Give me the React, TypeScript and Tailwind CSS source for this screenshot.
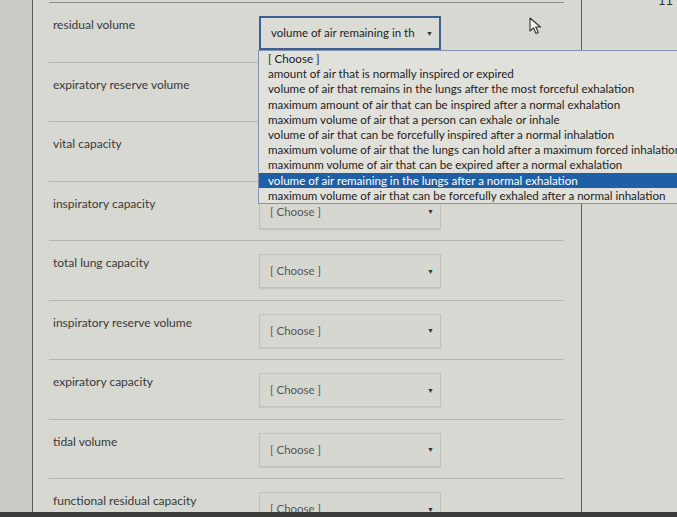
import React from "react"

const rows = [
  "residual volume",
  "expiratory reserve volume",
  "vital capacity",
  "inspiratory capacity",
  "total lung capacity",
  "inspiratory reserve volume",
  "expiratory capacity",
  "tidal volume",
  "functional residual capacity",
]

const options = [
  "[ Choose ]",
  "amount of air that is normally inspired or expired",
  "volume of air that remains in the lungs after the most forceful exhalation",
  "maximum amount of air that can be inspired after a normal exhalation",
  "maximum volume of air that a person can exhale or inhale",
  "volume of air that can be forcefully inspired after a normal inhalation",
  "maximum volume of air that the lungs can hold after a maximum forced inhalation",
  "maximunm volume of air that can be expired after a normal exhalation",
  "volume of air remaining in the lungs after a normal exhalation",
  "maximum volume of air that can be forcefully exhaled after a normal inhalation",
]

function Select({ value, focused, hidden }: { value: string; focused?: boolean; hidden?: boolean }) {
  return (
    <div
      className={
        "mt-[13px] h-[34px] w-[182px] flex items-center justify-between pl-[10px] pr-[6px] overflow-hidden " +
        (hidden ? "invisible " : "") +
        (focused
          ? "border-2 border-[#3d5f93] bg-[#dcdcd7]"
          : "border border-[#c2c2bc] bg-[#d7d7d1] shadow-[0_1px_1px_rgba(0,0,0,0.08)]")
      }
    >
      <span className={"text-[11.5px] whitespace-nowrap " + (focused ? "text-[#222]" : "text-[#555]")}>{value}</span>
      <span className="text-[7px] text-[#333] shrink-0 pl-[4px]">▼</span>
    </div>
  )
}

export default function App() {
  return (
    <div
      className="relative w-[677px] h-[517px] overflow-hidden flex bg-[#cbcbc5]"
      style={{ fontFamily: "Lato, 'Open Sans', sans-serif" }}
    >
      <div className="w-[32px] shrink-0" />
      <div className="w-[550px] shrink-0 border-l border-r border-[#5a5a58] bg-[#d8d8d2] pt-[2px]">
        {rows.map((label, i) => (
          <div
            key={label}
            className={
              "ml-[16px] mr-[17px] h-[59.5px] flex border-t " +
              (i === 0 ? "border-[#8c8c88]" : "border-[#b6b6b0]")
            }
          >
            <div className="w-[210px] pl-[4px] pt-[14px] text-[12px] leading-[16px] text-[#383838]">
              {label}
            </div>
            <Select
              value={i === 0 ? "volume of air remaining in th" : "[ Choose ]"}
              focused={i === 0}
              hidden={i === 1 || i === 2}
            />
          </div>
        ))}
      </div>
      <div className="flex-1 bg-[#d9d9d4]">
        <div className="h-[51px] border-b border-[#4a4a48]" />
      </div>

      {/* open dropdown list */}
      <div className="absolute left-[258px] top-[50px] w-[440px] border border-[#8494b0] bg-[#e1e1dc]">
        {options.map((o, i) => (
          <div
            key={o}
            className={
              "h-[15.2px] pl-[9px] text-[11.6px] leading-[15.2px] whitespace-nowrap " +
              (i === 8 ? "bg-[#1f5fa6] text-white" : "text-[#222]")
            }
          >
            {o}
          </div>
        ))}
      </div>

      {/* mouse pointer */}
      <svg className="absolute left-[529px] top-[17px]" width="14" height="18" viewBox="0 0 14 18">
        <path d="M1 1 L1 14 L4.5 10.8 L7 16.5 L9.2 15.5 L6.8 10 L11.5 10 Z" fill="#f2f2f0" stroke="#333" strokeWidth="1.1" strokeLinejoin="round" />
      </svg>

      <div className="absolute right-[4px] -top-[9px] text-[13px] text-[#333]">11</div>

      <div className="absolute left-0 bottom-0 w-full h-[5px] bg-[#3d3d3b]" />
    </div>
  )
}
